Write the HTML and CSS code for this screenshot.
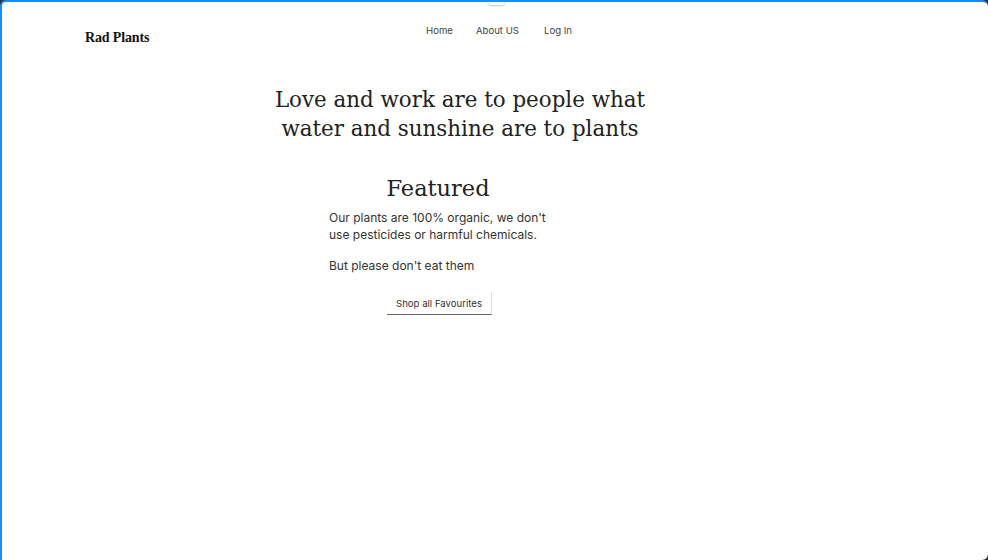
FILE: index.html
```html
<!DOCTYPE html>
<html lang="en">
<head>
<meta charset="utf-8">
<title>Rad Plants</title>
<link rel="stylesheet" href="styles.css">
</head>
<body>
<div class="frame">
  <span class="tab"></span>
  <header class="header">
    <div class="logo">Rad Plants</div>
    <nav class="nav">
      <a href="#">Home</a>
      <a href="#">About US</a>
      <a href="#">Log In</a>
    </nav>
  </header>
  <main class="content">
    <h1 class="hero">Love and work are to people what<br>water and sunshine are to plants</h1>
    <section class="featured">
      <h2 class="featured-title">Featured</h2>
      <p class="text">Our plants are 100% organic, we don't use pesticides or harmful chemicals.</p>
      <p class="text">But please don't eat them</p>
      <div class="actions"><button class="btn">Shop all Favourites</button></div>
    </section>
  </main>
</div>
</body>
</html>
```

FILE: styles.css
```css
html, body {
  margin: 0;
  padding: 0;
  background: #2e2e2e;
}
.frame {
  position: relative;
  box-sizing: border-box;
  width: 988px;
  height: 560px;
  background: #fff;
  border-top: 2px solid #1a8cff;
  border-left: 2px solid #1a8cff;
  border-radius: 6px 6px 6px 0;
  overflow: hidden;
}
.tab {
  position: absolute;
  top: -2px;
  left: 486px;
  width: 17px;
  height: 5px;
  background: #fff;
  border-radius: 0 0 4px 4px;
  box-shadow: 0 1px 2px rgba(0,0,0,0.25);
}
.header {
  display: flex;
  align-items: flex-start;
  padding: 22px 0 0 83px;
  height: 40px;
}
.logo {
  width: 341px;
  font-family: "Liberation Serif", "DejaVu Serif", serif;
  font-size: 14px;
  font-weight: 700;
  letter-spacing: -0.15px;
  color: #111;
  margin-top: 6px;
}
.nav {
  display: flex;
  gap: 23px;
  margin-top: 1px;
}
.nav a {
  font-family: Inter, "Liberation Sans", sans-serif;
  font-size: 9.6px;
  color: #444;
  text-decoration: none;
}
.nav a:last-child { margin-left: 2px; }
.content {
  width: 916px;
}
.hero {
  margin: 21px 0 0;
  text-align: center;
  font-family: "DejaVu Serif", "Liberation Serif", serif;
  font-weight: 300;
  font-size: 21.4px;
  line-height: 29px;
  color: #222;
}
.featured {
  margin: 30px 0 0 327px;
  width: 232px;
}
.featured-title {
  margin: 0;
  text-align: center;
  font-family: "DejaVu Serif", "Liberation Serif", serif;
  font-weight: 300;
  font-size: 22.5px;
  line-height: 30px;
  color: #222;
  padding-right: 14px;
}
.text {
  margin: 6px 0 14px;
  font-family: Inter, "Liberation Sans", sans-serif;
  font-size: 12px;
  line-height: 17px;
  color: #333;
}
.actions {
  display: flex;
  justify-content: flex-start;
  padding: 4px 0 0 58px;
}
.btn {
  font-family: Inter, "Liberation Sans", sans-serif;
  font-size: 9.6px;
  color: #333;
  background: #fff;
  border: none;
  border-right: 1px solid #ddd;
  border-bottom: 1px solid #666;
  padding: 5px 9px 5px 9px;
  height: 23px;
}
```
